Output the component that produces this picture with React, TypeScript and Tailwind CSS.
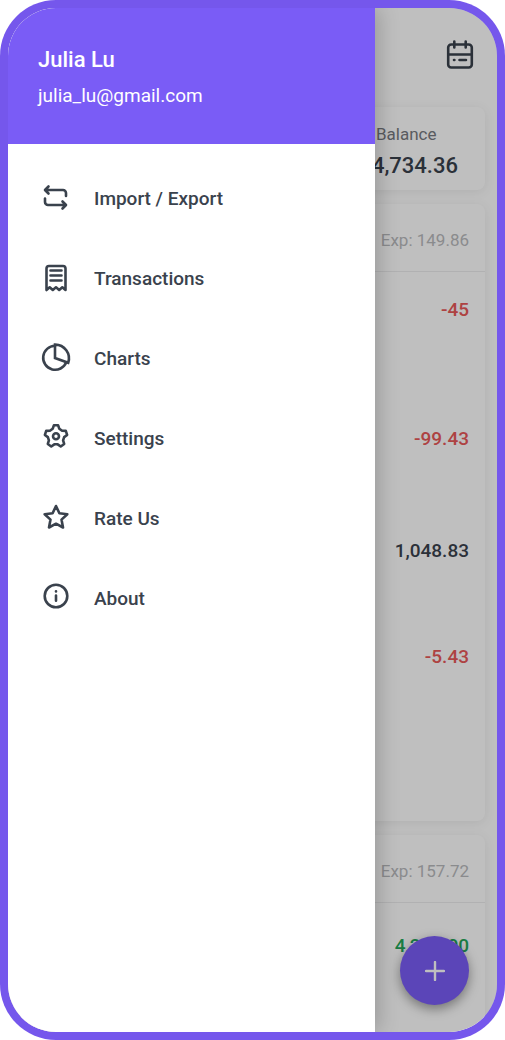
import React from "react";

type IconProps = { children: React.ReactNode };

const Icon = ({ children }: IconProps) => (
  <svg
    viewBox="0 0 32 32"
    className="h-8 w-8 shrink-0"
    fill="none"
    stroke="currentColor"
    strokeWidth="2.6"
    strokeLinecap="round"
    strokeLinejoin="round"
    aria-hidden="true"
  >
    {children}
  </svg>
);

const ImportExportIcon = () => (
  <Icon>
    <path d="M26 14V11a3 3 0 0 0-3-3H5.500M8.500 4.500 5 8l3.500 3.500" />
    <path d="M5 16.500V20a3 3 0 0 0 3 3h17.500M22.500 19.500l3.500 3.500-3.500 3.500" />
  </Icon>
);

const ReceiptIcon = () => (
  <Icon>
    <path d="M6.500 28V6.500a2.500 2.500 0 0 1 2.500-2.500h14a2.500 2.500 0 0 1 2.500 2.500V28l-3.200-2.700-3.100 2.700-3.200-2.700-3.200 2.700-3.100-2.700z" />
    <path d="M10.500 8.500h11M10.500 13.500h11M10.500 18.500h11" />
  </Icon>
);

const ChartIcon = () => (
  <Icon>
    <path strokeLinejoin="miter" d="M15 16V2.600A13.800 13.800 0 0 1 28.200 20.800z" />
    <path d="M15 3.800a12 12 0 1 0 11.300 16.500" />
  </Icon>
);

const SettingsIcon = () => (
  <Icon>
    <path d="M13.860 3.300H18.140L19.340 6.800 22.090 8.810 25.800 8.870 27.120 12.930 24.160 15.160 23.100 18.400 24.190 21.940 20.740 24.450 17.710 22.320H14.290L11.260 24.450 7.810 21.940 8.900 18.400 7.840 15.160 4.880 12.930 6.200 8.870 9.910 8.810 12.660 6.800z" />
    <circle cx="16" cy="14.300" r="3" />
  </Icon>
);

const StarIcon = () => (
  <Icon>
    <path d="M16 4l3.400 7.300 7.900.9-5.800 5.400 1.500 7.900-7-3.800-7 3.800 1.500-7.900-5.800-5.400 7.900-.9z" />
  </Icon>
);

const AboutIcon = () => (
  <Icon>
    <circle cx="16" cy="14" r="11.300" />
    <path d="M16 13.500v5.300M16 9.300v.1" />
  </Icon>
);

const CalendarIcon = () => (
  <Icon>
    <rect x="4.200" y="6.500" width="23.600" height="23" rx="3" />
    <path d="M10.300 3.500v6M21.700 3.500v6M4.200 16.500h23.600M10 22h.4M15.500 22h6.500" />
  </Icon>
);

const menuItems = [
  { label: "Import / Export", icon: <ImportExportIcon /> },
  { label: "Transactions", icon: <ReceiptIcon /> },
  { label: "Charts", icon: <ChartIcon /> },
  { label: "Settings", icon: <SettingsIcon /> },
  { label: "Rate Us", icon: <StarIcon /> },
  { label: "About", icon: <AboutIcon /> },
];

const Drawer = () => (
  <aside className="absolute inset-y-0 left-0 w-3/4 bg-white shadow-[4px_0_20px_rgba(0,0,0,0.2)]">
    <header className="flex h-[136px] flex-col justify-center gap-2 bg-[#7a5cf6] pt-1 pl-[30px] text-white">
      <h1 className="text-[22px] leading-7 font-medium">Julia Lu</h1>
      <p className="text-[19px] leading-7">julia_lu@gmail.com</p>
    </header>
    <nav className="pt-3.5">
      {menuItems.map((item) => (
        <a key={item.label} href="#" className="flex h-20 items-center gap-[22px] pl-8 text-[19px] font-medium text-[#3a424d]">
          {item.icon}
          <span className="pt-0.5">{item.label}</span>
        </a>
      ))}
    </nav>
  </aside>
);

const cardClass = "rounded-lg bg-white shadow-[0_2px_12px_rgba(0,0,0,0.08)]";

const Overview = () => (
  <main className="flex flex-1 flex-col bg-white px-3 text-[19px]">
    <div className="flex h-[99px] items-center justify-end pr-[9px] pb-2 text-[#3a424d]">
      <button type="button" aria-label="Calendar">
        <CalendarIcon />
      </button>
    </div>

    <section className={`${cardClass} flex h-[83px] flex-col items-end justify-center pt-1.5 pr-[27px]`}>
      <div>
        <p className="pl-1 text-[17px] leading-7 text-[#777a80]">Balance</p>
        <p className="text-[22px] leading-9 font-medium text-[#3a424d]">4,734.36</p>
      </div>
    </section>

    <section className={`${cardClass} mt-3.5 h-[617px] text-right font-medium`}>
      <div className="border-b border-[#ececee] pt-[22px] pr-4 pb-[17px] text-[17px] leading-7 font-normal text-[#b9babd]">
        Exp: 149.86
      </div>
      <ul className="pr-4 leading-7">
        <li className="pt-6 text-[#e85959]">-45</li>
        <li className="pt-[101px] text-[#e85959]">-99.43</li>
        <li className="pt-[84px] text-[#3a424d]">1,048.83</li>
        <li className="pt-[78px] text-[#e85959]">-5.43</li>
      </ul>
    </section>

    <section className={`${cardClass} mt-3.5 flex-1 rounded-b-none text-right font-medium`}>
      <div className="border-b border-[#ececee] pt-[22px] pr-4 pb-[17px] text-[17px] leading-7 font-normal text-[#b9babd]">
        Exp: 157.72
      </div>
      <p className="pt-[29px] pr-4 leading-7 text-[#24a85b]">4,230.00</p>
    </section>
  </main>
);

export default function App() {
  return (
    <div className="min-h-screen bg-white font-['Roboto',sans-serif]">
      <div className="flex min-h-screen rounded-[56px] bg-[#7557ec] p-2">
        <div className="relative isolate flex flex-1 overflow-hidden rounded-[48px]">
          <Overview />
          <button
            type="button"
            aria-label="Add transaction"
            className="absolute right-7 bottom-[27px] flex h-[69px] w-[69px] items-center justify-center rounded-full bg-[#7a5cf6] text-white shadow-[0_4px_12px_rgba(0,0,0,0.4)]"
          >
            <svg viewBox="0 0 20 20" className="h-5 w-5" stroke="currentColor" strokeWidth="2.4" strokeLinecap="round">
              <path d="M10 1v18M1 10h18" />
            </svg>
          </button>
          <div className="absolute inset-0 bg-black/25" />
          <Drawer />
        </div>
      </div>
    </div>
  );
}
